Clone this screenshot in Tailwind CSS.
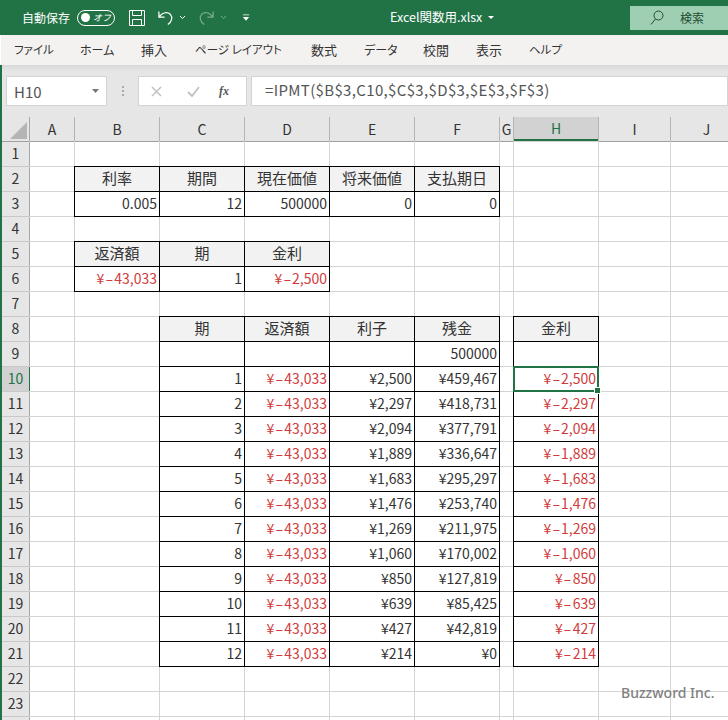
<!DOCTYPE html>
<html lang="ja">

<head>
    <meta charset="UTF-8">
    <title>Excel関数用.xlsx</title>
    <script src="https://cdn.jsdelivr.net/npm/@tailwindcss/browser@4"></script>
</head>

<body class="w-[728px] h-[720px] overflow-hidden bg-white text-[#333] font-['Noto_Sans_CJK_JP',sans-serif]">

    <!-- Title bar -->
    <div class="h-[35px] bg-[#217346] text-white flex items-center text-[12px] relative">
        <span class="ml-[22px] w-[55px]">自動保存</span>
        <div class="w-[38px] h-[16px] rounded-full border border-white flex items-center justify-between px-[3px]">
            <span class="w-[9px] h-[9px] rounded-full bg-white"></span>
            <span class="text-[9px] italic leading-none">オフ</span>
        </div>
        <svg class="ml-[13px]" width="18" height="18" viewBox="0 0 18 18" fill="none" stroke="white" stroke-width="1">
            <path d="M1.5 1.5h15v15h-15z M4.5 1.5v5h9v-5 M4.5 16.5v-6h9v6" />
        </svg>
        <svg class="ml-[11px]" width="17" height="18" viewBox="0 0 18 18" fill="none" stroke="white" stroke-width="1.3">
            <path d="M2 2v6h6 M2.5 7.500C6 3 11 2 14 5c3 3.500 1.500 8-2.500 11" />
        </svg>
        <svg class="ml-[5px]" width="7" height="5" viewBox="0 0 7 5" fill="none" stroke="white"><path d="M1 1l2.500 2.500L6 1" /></svg>
        <svg class="ml-[12px] opacity-40" width="17" height="18" viewBox="0 0 18 18" fill="none" stroke="white" stroke-width="1.300">
            <path d="M16 2v6h-6 M15.500 7.500C12 3 7 2 4 5c-3 3.500-1.500 8 2.500 11" />
        </svg>
        <svg class="ml-[5px] opacity-40" width="7" height="5" viewBox="0 0 7 5" fill="none" stroke="white"><path d="M1 1l2.500 2.500L6 1" /></svg>
        <svg class="ml-[15px]" width="8" height="8" viewBox="0 0 9 8" fill="white"><path d="M1 0h7v1H1z M1 3h7L4.500 7z" /></svg>
        <span class="ml-[140px] text-[12.500px]">Excel関数用.xlsx</span>
        <svg class="ml-[6px]" width="7" height="4" viewBox="0 0 7 4" fill="white"><path d="M0 0h6L3 3z" /></svg>
        <!-- Search box -->
        <div class="absolute left-[630px] top-[6px] w-[98px] h-[24px] bg-[#9fcfb2] flex items-center text-[#1f4d33] text-[12px]">
            <svg class="ml-[20px]" width="14" height="16" viewBox="0 0 14 16" fill="none" stroke="#1f4d33">
                <circle cx="8.500" cy="5.500" r="4.500" /><path d="M5.500 9L1 14.500" />
            </svg>
            <span class="ml-[16px]">検索</span>
        </div>
    </div>

    <!-- Ribbon tabs -->
    <div class="h-[30px] ml-px bg-[#f3f2f1] flex items-center text-[13px] relative [font-feature-settings:'palt']">
        <span class="ml-[13px] w-[66px] text-[11.500px]">ファイル</span>
        <span class="w-[61px] text-[12px]">ホーム</span>
        <span class="w-[54px]">挿入</span>
        <span class="w-[116px] text-[11.500px]">ページ レイアウト</span>
        <span class="w-[53px]">数式</span>
        <span class="w-[59px] text-[12px]">データ</span>
        <span class="w-[53px]">校閲</span>
        <span class="w-[53px]">表示</span>
        <span class="text-[11.500px]">ヘルプ</span>
    </div>

    <!-- Formula bar -->
    <div class="h-[52px] border-l-2 border-[#217346] bg-[#e6e6e6] flex items-start pt-[11px] bg-gradient-to-b from-[#d8d8d8] to-[#e6e6e6] to-[6px]">
        <div class="ml-[4px] w-[101px] h-[30px] bg-white border border-[#d4d4d4] flex items-center justify-between pl-[7px] pr-[7px] text-[15px] text-[#555]">
            <span class="mt-[3px]">H10</span>
            <svg width="7" height="4" viewBox="0 0 7 4" fill="#777"><path d="M0 0h7L3.500 4z" /></svg>
        </div>
        <div class="w-[31px] h-[30px] flex flex-col items-center justify-center gap-[2px]">
            <span class="w-[2px] h-[2px] bg-[#aaa]"></span>
            <span class="w-[2px] h-[2px] bg-[#aaa]"></span>
            <span class="w-[2px] h-[2px] bg-[#aaa]"></span>
        </div>
        <div class="w-[109px] h-[30px] bg-white border border-[#d4d4d4] flex items-center text-[#bbb]">
            <svg class="ml-[12px]" width="11" height="11" viewBox="0 0 11 11" fill="none" stroke="#c0c0c0" stroke-width="1.500"><path d="M1 1l9 9 M10 1l-9 9" /></svg>
            <svg class="ml-[25px]" width="13" height="11" viewBox="0 0 13 11" fill="none" stroke="#c0c0c0" stroke-width="1.800"><path d="M1 6l4 4 7-9" /></svg>
            <span class="ml-[19px] text-[12px] italic font-bold text-[#555] font-['Liberation_Serif',serif]">fx</span>
        </div>
        <div class="ml-[4px] flex-1 h-[30px] bg-white border border-[#d4d4d4] flex items-center pl-[13px] pb-[2px] text-[15px] tracking-[0.35px] text-[#555] whitespace-nowrap">=IPMT($B$3,C10,$C$3,$D$3,$E$3,$F$3)</div>
    </div>

    <!-- Sheet -->
    <div id="sheet" class="border-l-2 border-[#217346] h-[603px] overflow-hidden bg-[#d4d4d4] grid gap-px grid-cols-[27px_44px_84px_84px_84px_84px_84px_13px_84px_71px_71px] auto-rows-[24px]"></div>

    <div class="absolute left-[621px] top-[682px] text-[14px] font-medium text-[#808080] font-['Noto_Sans',sans-serif]">Buzzword Inc.</div>

    <script>
        const cols = ['A', 'B', 'C', 'D', 'E', 'F', 'G', 'H', 'I', 'J'];
        const pay = '¥-43,033';

        // row number -> { column index: [text, kind] }, kinds: h header, n number, r red, e empty boxed
        const cells = {
            2: { 1: ['利率', 'h'], 2: ['期間', 'h'], 3: ['現在価値', 'h'], 4: ['将来価値', 'h'], 5: ['支払期日', 'h'] },
            3: { 1: ['0.005', 'n'], 2: ['12', 'n'], 3: ['500000', 'n'], 4: ['0', 'n'], 5: ['0', 'n'] },
            5: { 1: ['返済額', 'h'], 2: ['期', 'h'], 3: ['金利', 'h'] },
            6: { 1: [pay, 'r'], 2: ['1', 'n'], 3: ['¥-2,500', 'r'] },
            8: { 2: ['期', 'h'], 3: ['返済額', 'h'], 4: ['利子', 'h'], 5: ['残金', 'h'], 7: ['金利', 'h'] },
            9: { 2: ['', 'e'], 3: ['', 'e'], 4: ['', 'e'], 5: ['500000', 'n'], 7: ['', 'e'] },
        };
        const rows = [
            ['¥2,500', '¥459,467', '¥-2,500'], ['¥2,297', '¥418,731', '¥-2,297'],
            ['¥2,094', '¥377,791', '¥-2,094'], ['¥1,889', '¥336,647', '¥-1,889'],
            ['¥1,683', '¥295,297', '¥-1,683'], ['¥1,476', '¥253,740', '¥-1,476'],
            ['¥1,269', '¥211,975', '¥-1,269'], ['¥1,060', '¥170,002', '¥-1,060'],
            ['¥850', '¥127,819', '¥-850'], ['¥639', '¥85,425', '¥-639'],
            ['¥427', '¥42,819', '¥-427'], ['¥214', '¥0', '¥-214'],
        ];
        rows.forEach((r, i) => {
            cells[10 + i] = { 2: [String(i + 1), 'n'], 3: [pay, 'r'], 4: [r[0], 'n'], 5: [r[1], 'n'], 7: [r[2], 'r'] };
        });

        const headBase = 'flex items-center justify-center text-[14px] ';
        const kinds = {
            h: 'bg-[#f2f2f2] outline outline-1 outline-black justify-center text-[15px]',
            n: 'bg-white outline outline-1 outline-black justify-end text-[14px] pr-[2px]',
            e: 'bg-white outline outline-1 outline-black justify-end',
            r: 'bg-white outline outline-1 outline-black justify-end text-[14px] pr-[2px] text-[#d13b3b]',
        };

        let html = '<div class="bg-[#e6e6e6] relative shadow-[1px_0_0_#a8a8a8,0_1px_0_#a0a0a0]"><span class="absolute right-[2px] bottom-[2px] w-0 h-0 border-l-[17px] border-l-transparent border-b-[17px] border-b-[#b4b4b4]"></span></div>';
        cols.forEach(c => {
            const active = c === 'H';
            html += '<div class="' + headBase + (active
                ? 'bg-[#d2d2d2] text-[#217346] border-b-2 border-[#217346] shadow-[1px_0_0_#b4b4b4]'
                : 'bg-[#e6e6e6] shadow-[1px_0_0_#b4b4b4,0_1px_0_#a0a0a0]') + '">' + c + '</div>';
        });
        for (let r = 1; r <= 24; r++) {
            const active = r === 10;
            html += '<div class="pb-[2px] ' + headBase + (active
                ? 'bg-[#d2d2d2] text-[#217346] shadow-[1px_0_0_#217346,0_1px_0_#c8c8c8]'
                : 'bg-[#e6e6e6] shadow-[1px_0_0_#a8a8a8,0_1px_0_#c8c8c8]') + '">' + (r < 24 ? r : '') + '</div>';
            for (let c = 0; c < cols.length; c++) {
                const cell = cells[r] && cells[r][c];
                if (!cell) { html += '<div class="bg-white"></div>'; continue; }
                const selected = r === 10 && c === 7;
                // the minus sign runs wider in the reference font
                const text = cell[1] === 'r' ? '<span>' + cell[0].replace('-', '<span class="inline-block scale-x-[1.7] mx-[2.5px]">-</span>') + '</span>' : cell[0];
                html += '<div class="relative flex items-center pb-[2px] ' + kinds[cell[1]] + '">' + text +
                    (selected ? '<span class="absolute -inset-px border-2 border-[#217346] z-10"></span><span class="absolute -right-[3px] -bottom-[3px] w-[5px] h-[5px] bg-[#217346] border border-white box-content z-20"></span>' : '') +
                    '</div>';
            }
        }
        document.getElementById('sheet').innerHTML = html;
    </script>

</body>

</html>
